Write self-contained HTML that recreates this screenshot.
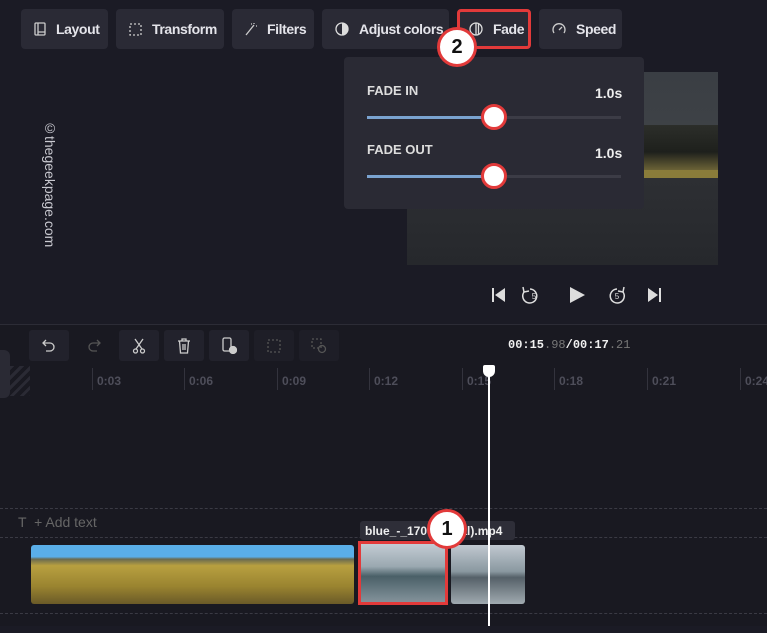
<!DOCTYPE html>
<html><head><meta charset="utf-8"><style>
*{margin:0;padding:0;box-sizing:border-box}
body{width:767px;height:626px;overflow:hidden;background:#1b1b25;font-family:"Liberation Sans",sans-serif;color:#e6e6ea;position:relative}
.abs{position:absolute}
.btn{position:absolute;top:9px;height:40px;background:#2a2a35;border-radius:4px;font-size:14px;font-weight:bold;color:#e4e4ea;display:flex;align-items:center;padding-left:13px;gap:10px;white-space:nowrap;letter-spacing:-0.4px}
.btn svg{flex:none}
.tb{position:absolute;top:330px;width:40px;height:31px;background:#22222c;border-radius:3px;display:flex;align-items:center;justify-content:center}
.tick{position:absolute;top:368px;width:1px;height:22px;background:#33333d}
.lbl{position:absolute;top:374px;font-size:12px;font-weight:bold;color:#4e4e5a}
.red{border:3px solid #e23a3a}
.circ{position:absolute;width:40px;height:40px;border-radius:50%;background:#fff;border:3px solid #e23a3a;font-weight:bold;font-size:20px;color:#111;display:flex;align-items:center;justify-content:center}
</style></head><body>
<div class="abs" style="left:0;top:324px;width:767px;height:302px;background:#191921;border-top:1px solid #2c2c36"></div>

<div class="btn" style="left:21px;width:87px"><svg width="12" height="14" viewBox="0 0 12 14" fill="none" stroke="#ccc" stroke-width="1.3"><rect x="1" y="1" width="10" height="12" rx="1"/><path d="M4 1v12M4 10h7"/></svg>Layout</div>
<div class="btn" style="left:116px;width:108px"><svg width="13" height="13" viewBox="0 0 13 13" fill="none" stroke="#ccc" stroke-width="1.3" stroke-dasharray="2 2"><rect x="1" y="1" width="11" height="11"/></svg>Transform</div>
<div class="btn" style="left:232px;width:82px"><svg width="12" height="14" viewBox="0 0 12 14" fill="none" stroke="#ccc" stroke-width="1.3"><path d="M1 13L9 3M9 1v1M11 4h1M6 2h1"/></svg>Filters</div>
<div class="btn" style="left:322px;width:127px"><svg width="14" height="14" viewBox="0 0 14 14"><circle cx="7" cy="7" r="6" fill="none" stroke="#ddd" stroke-width="1.3"/><path d="M7 1a6 6 0 0 1 0 12z" fill="#ddd"/></svg>Adjust colors</div>
<div class="btn red" style="left:457px;width:74px;padding-left:9px"><svg width="14" height="14" viewBox="0 0 14 14" fill="none" stroke="#ddd" stroke-width="1.3"><circle cx="7" cy="7" r="6"/><path d="M7 1v12M9.5 2v10"/></svg>Fade</div>
<div class="btn" style="left:539px;width:83px"><svg width="14" height="14" viewBox="0 0 14 14" fill="none" stroke="#ccc" stroke-width="1.3"><path d="M2 11A6 6 0 1 1 12 11M7 8l3-3"/></svg>Speed</div>

<div class="abs" style="left:38px;top:120px;width:20px;height:150px;font-size:14px;color:#c9c9d0;writing-mode:vertical-rl">©thegeekpage.com</div>

<div class="abs" style="left:407px;top:72px;width:311px;height:193px;background:linear-gradient(180deg,#3a3e44 0%,#3e4246 30%,#2e3034 50%,#26282c 100%)"></div>
<div class="abs" style="left:644px;top:125px;width:74px;height:45px;background:linear-gradient(180deg,#2c2e2a,#1e201c 60%,#6a6236)"></div>
<div class="abs" style="left:644px;top:170px;width:74px;height:8px;background:#8a7c3a"></div>

<div class="abs" style="left:344px;top:57px;width:300px;height:152px;background:#2a2a34;border-radius:4px"></div>
<div class="abs" style="left:367px;top:83px;font-size:13px;font-weight:bold;color:#ddd">FADE IN</div>
<div class="abs" style="left:595px;top:85px;font-size:14px;font-weight:bold;color:#eee">1.0s</div>
<div class="abs" style="left:367px;top:142px;font-size:13px;font-weight:bold;color:#ddd">FADE OUT</div>
<div class="abs" style="left:595px;top:145px;font-size:14px;font-weight:bold;color:#eee">1.0s</div>
<div class="abs" style="left:367px;top:116px;width:254px;height:3px;background:#3c3c46"></div>
<div class="abs" style="left:367px;top:116px;width:126px;height:3px;background:#7aa3d0"></div>
<div class="abs" style="left:367px;top:175px;width:254px;height:3px;background:#3c3c46"></div>
<div class="abs" style="left:367px;top:175px;width:126px;height:3px;background:#7aa3d0"></div>
<div class="abs" style="left:481px;top:104px;width:26px;height:26px;border-radius:50%;background:#fff;border:3px solid #e23a3a"></div>
<div class="abs" style="left:481px;top:163px;width:26px;height:26px;border-radius:50%;background:#fff;border:3px solid #e23a3a"></div>
<div class="circ" style="left:437px;top:27px">2</div>

<svg class="abs" style="left:490px;top:284px" width="175" height="22" viewBox="0 0 175 22" fill="#ddd" stroke="#ddd">
<path d="M3 4v14" stroke-width="2"/><path d="M15 4L5 11l10 7z" stroke="none"/>
<path d="M40 5a7 7 0 1 1-6 3" fill="none" stroke-width="1.5"/><path d="M33 3l1 5 5-1" fill="none" stroke-width="1.5"/><text x="44" y="15" font-size="8" text-anchor="middle" stroke="none">5</text>
<path d="M80 3l15 8-15 8z" stroke="none"/>
<path d="M127 5a7 7 0 1 0 6 3" fill="none" stroke-width="1.5"/><path d="M134 3l-1 5-5-1" fill="none" stroke-width="1.5"/><text x="127" y="15" font-size="8" text-anchor="middle" stroke="none">5</text>
<path d="M158 4l10 7-10 7z" stroke="none"/><path d="M170 4v14" stroke-width="2"/>
</svg>

<div class="tb" style="left:29px"><svg width="14" height="14" viewBox="0 0 14 14" fill="none" stroke="#ccc" stroke-width="1.3"><path d="M4 1L1 4l3 3M1 4h7a4 4 0 0 1 0 8H4"/></svg></div>
<div class="tb" style="left:74px;background:none"><svg width="14" height="14" viewBox="0 0 14 14" fill="none" stroke="#555" stroke-width="1.3"><path d="M10 1l3 3-3 3M13 4H6a4 4 0 0 0 0 8h4"/></svg></div>
<div class="tb" style="left:119px"><svg width="14" height="16" viewBox="0 0 14 16" fill="none" stroke="#ccc" stroke-width="1.3"><path d="M3 1l7 10M11 1L4 11"/><circle cx="3.5" cy="13" r="2"/><circle cx="10.5" cy="13" r="2"/></svg></div>
<div class="tb" style="left:164px"><svg width="14" height="16" viewBox="0 0 14 16" fill="none" stroke="#ccc" stroke-width="1.3"><path d="M1 3h12M5 3V1h4v2M2.5 3l1 12h7l1-12M6 6v6M8 6v6"/></svg></div>
<div class="tb" style="left:209px"><svg width="16" height="17" viewBox="0 0 16 17" fill="none" stroke="#ccc" stroke-width="1.3"><rect x="2" y="1" width="8" height="13" rx="1.5"/><circle cx="12" cy="13" r="3.5" fill="#ccc"/></svg></div>
<div class="tb" style="left:254px;background:#1e1e27"><svg width="14" height="14" viewBox="0 0 14 14" fill="none" stroke="#555" stroke-width="1.3" stroke-dasharray="2 2"><rect x="1" y="1" width="12" height="12"/></svg></div>
<div class="tb" style="left:299px;background:#1e1e27"><svg width="16" height="16" viewBox="0 0 16 16" fill="none" stroke="#555" stroke-width="1.3"><rect x="1" y="1" width="9" height="9" stroke-dasharray="2 2"/><circle cx="11" cy="11" r="3.5"/></svg></div>

<div class="abs" style="left:508px;top:338px;font-family:'Liberation Mono',monospace;font-size:12px;font-weight:bold;color:#f0f0f0">00:15<span style="color:#777;font-weight:normal">.98</span>/00:17<span style="color:#777;font-weight:normal">.21</span></div>
<div class="abs" style="left:0;top:350px;width:10px;height:48px;background:#2a2a34;border-radius:0 6px 6px 0"></div>
<div class="abs" style="left:10px;top:366px;width:20px;height:30px;background:repeating-linear-gradient(135deg,#2a2a34 0 3px,transparent 3px 7px)"></div>

<div class="tick" style="left:92px"></div><div class="tick" style="left:184px"></div><div class="tick" style="left:277px"></div><div class="tick" style="left:369px"></div><div class="tick" style="left:462px"></div><div class="tick" style="left:554px"></div><div class="tick" style="left:647px"></div><div class="tick" style="left:740px"></div>
<div class="lbl" style="left:97px">0:03</div><div class="lbl" style="left:189px">0:06</div><div class="lbl" style="left:282px">0:09</div><div class="lbl" style="left:374px">0:12</div><div class="lbl" style="left:467px">0:15</div><div class="lbl" style="left:559px">0:18</div><div class="lbl" style="left:652px">0:21</div><div class="lbl" style="left:745px">0:24</div>

<div class="abs" style="left:0;top:508px;width:767px;height:30px;border-top:1px dashed #3a3a44;border-bottom:1px dashed #3a3a44"></div>
<div class="abs" style="left:18px;top:514px;font-size:14px;color:#666">T &nbsp;+ Add text</div>
<div class="abs" style="left:0;top:613px;width:767px;height:20px;border-top:1px dashed #3a3a44"></div>

<div class="abs" style="left:31px;top:545px;width:323px;height:59px;border-radius:3px;background:linear-gradient(180deg,#5aaee8 0%,#5aaee8 20%,#6a6a50 24%,#b8a040 35%,#9a8430 70%,#6a5a28 100%)"></div>
<div class="abs" style="left:358px;top:541px;width:90px;height:64px;background:linear-gradient(180deg,#c8d0d8 0%,#9aa8b0 40%,#4a6068 55%,#8a98a0 100%)"></div>
<div class="abs red" style="left:358px;top:541px;width:90px;height:64px"></div>
<div class="abs" style="left:451px;top:545px;width:74px;height:59px;border-radius:3px;background:linear-gradient(180deg,#c0c8d0 0%,#8a98a0 45%,#556068 55%,#a0aab0 100%)"></div>
<div class="abs" style="left:360px;top:521px;width:155px;height:19px;background:#2e2e38;border-radius:3px;font-size:12px;font-weight:bold;color:#eee;padding:3px 5px">blue_-_1700 &nbsp;&nbsp;&nbsp;&nbsp;&nbsp;&nbsp;&nbsp;al).mp4</div>
<div class="circ" style="left:427px;top:509px">1</div>

<div class="abs" style="left:488px;top:365px;width:2px;height:261px;background:#fff"></div>
<div class="abs" style="left:483px;top:365px;width:12px;height:12px;background:#fff;border-radius:2px 2px 6px 6px"></div>
</body></html>
